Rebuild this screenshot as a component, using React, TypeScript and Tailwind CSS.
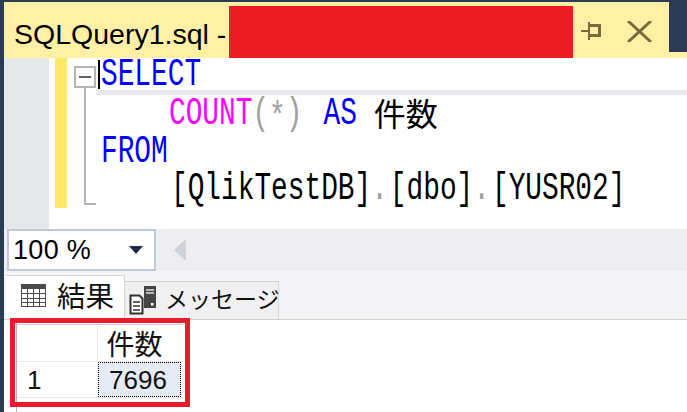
const NAVY = "#2b3a55";

const codeFont = { fontFamily: '"Liberation Mono", "Noto Sans CJK JP", monospace' };

const Code = ({ className = "", children }: { className?: string; children: React.ReactNode }) => (
    <span className={`inline-block origin-center scale-y-[1.38] ${className}`}>{children}</span>
);

const GridIcon = () => (
    <svg className="mb-[3px] shrink-0" width="26" height="24" viewBox="0 0 26 24" fill="none" stroke="#4a4a4a" strokeWidth="1">
        <rect x="0.5" y="0.5" width="24" height="22" />
        <rect x="0.5" y="0.5" width="24" height="4" fill="#4a4a4a" />
        <path d="M6.5 4v19M12.5 4v19M18.5 4v19M0 9.5h25M0 14.5h25M0 18.5h25" />
    </svg>
);

const MessageIcon = () => (
    <svg className="shrink-0" width="28" height="29" viewBox="0 0 28 29" fill="none">
        <path d="M1.5 9.5h9l3 3v15h-12z" fill="#fff" stroke="#333" strokeWidth="2" />
        <path d="M4 16h7M4 20h7M4 24h7" stroke="#333" strokeWidth="1.5" />
        <rect x="15" y="0" width="12" height="22" fill="#444" />
        <path d="M17 4h8M17 7h8" stroke="#ddd" strokeWidth="1.5" />
        <rect x="22" y="17" width="2.5" height="2.5" fill="#fff" />
    </svg>
);

const PinIcon = () => (
    <svg width="21" height="18" viewBox="0 0 21 18" fill="#7d6a3c">
        <path d="M0 8h7v2H0z" />
        <path d="M7 0h2v2h11v13H9v3H7zM9 5v7h8V5z" />
    </svg>
);

const CloseIcon = () => (
    <svg width="25" height="21" viewBox="0 0 25 21" fill="none" stroke="#7d6a3c" strokeWidth="3">
        <path d="M1 0l23 21M24 0L1 21" />
    </svg>
);

export default function App() {
    return (
        <div
            className="relative flex h-[412px] w-[687px] flex-col overflow-hidden border-t-2 border-l-4 bg-white"
            style={{ borderColor: NAVY, fontFamily: '"Liberation Sans", "Noto Sans CJK JP", sans-serif' }}
        >
            {/* Title tab */}
            <div className="flex h-[50px] shrink-0 bg-[#2b3a55]">
                <div className="flex w-[665px] items-center bg-[#fff0a5]">
                    <span className="ml-[10px] w-[215px] pt-[14px] text-[28.5px] leading-none whitespace-nowrap text-black">SQLQuery1.sql -</span>
                    <div className="mt-[4px] h-[46px] w-[344px] self-start bg-[#ed1c24]" />
                    <div className="ml-[8px] flex items-center gap-[25px] pt-[8px]">
                        <PinIcon />
                        <CloseIcon />
                    </div>
                </div>
            </div>
            <div className="flex h-[6px] shrink-0">
                <div className="h-full w-[225px] bg-[#fff0a5]" />
                <div className="h-full w-[344px] bg-[#ed1c24]" />
                <div className="h-full flex-1 bg-[#fff0a5]" />
            </div>

            {/* Editor */}
            <div className="flex h-[171px] shrink-0">
                <div className="w-[45px] shrink-0 bg-[#e6e7e8]" />
                <div className="ml-[6px] h-[150px] w-[12px] shrink-0 bg-[#ffe866]" />
                <div className="ml-[7px] flex w-[22px] shrink-0 flex-col pt-[8px]">
                    <div className="flex h-[22px] w-[22px] items-center justify-center border-2 border-[#b5b5b5]">
                        <div className="h-[2px] w-[12px] bg-[#666]" />
                    </div>
                    <div className="ml-[10px] h-[117px] w-[12px] border-b-2 border-l-2 border-[#b5b5b5]" />
                </div>
                <div className="min-w-0 flex-1 text-[27.8px] leading-none whitespace-pre" style={codeFont}>
                    <div className="flex h-[37px] items-center border-b-[5px] border-[#e8e8ee] pl-[5px]">
                        <span className="absolute ml-[-3px] h-[29px] w-[2px] bg-black" />
                        <Code className="translate-y-[1px] text-[#0000ff]">SELECT</Code>
                    </div>
                    <div className="flex h-[38px] items-center pl-[73px]">
                        <Code className="text-[#ff00ff]">COUNT</Code>
                        <Code className="text-[#a0a0a0]">(</Code>
                        <Code className="translate-y-[4px] text-[#a0a0a0]">*</Code>
                        <Code className="text-[#a0a0a0]">)</Code>
                        <Code className="ml-[21px] text-[#0000ff]">AS</Code>
                        <span className="mt-[-5px] ml-[17px] text-[32px] text-black" style={{ fontFamily: '"Noto Sans CJK JP", sans-serif' }}>件数</span>
                    </div>
                    <div className="flex h-[37px] items-center pl-[5px]">
                        <Code className="text-[#0000ff]">FROM</Code>
                    </div>
                    <div className="flex h-[37px] items-center pl-[75px]">
                        <Code className="text-black">[QlikTestDB]</Code>
                        <Code className="mr-[2px] text-[#a0a0a0]">.</Code>
                        <Code className="text-black">[dbo]</Code>
                        <Code className="mr-[2px] text-[#a0a0a0]">.</Code>
                        <Code className="text-black">[YUSR02]</Code>
                    </div>
                </div>
            </div>

            {/* Zoom bar */}
            <div className="flex h-[42px] shrink-0 items-center bg-[#eeeef2]">
                <div className="ml-[3px] flex h-[42px] w-[149px] items-center justify-between border-2 border-[#c2c8dc] bg-white pr-[11px] pl-[4px] text-[27px] text-black">
                    <span className="tracking-[0.3px]">100 %</span>
                    <span className="h-0 w-0 border-x-[7px] border-t-[8px] border-x-transparent border-t-[#1e2a44]" />
                </div>
                <span className="ml-[18px] h-0 w-0 border-y-[11px] border-r-[12px] border-y-transparent border-r-[#cfd2d8]" />
            </div>

            {/* Result tabs */}
            <div className="flex h-[49px] shrink-0 items-end border-b border-[#d0d0d0] bg-[#f4f4f6] pl-[2px]">
                <div className="flex h-[44px] w-[119px] items-center gap-[10px] border-t border-r border-[#d4d4d4] bg-white pl-[15px] text-[28.5px] text-[#111]">
                    <GridIcon />
                    <span>結果</span>
                </div>
                <div className="flex h-[38px] w-[154px] items-center gap-[8px] border-t border-r border-[#d4d4d4] bg-[#f0f0f2] pl-[4px] text-[23px] whitespace-nowrap text-[#111]">
                    <MessageIcon />
                    <span>メッセージ</span>
                </div>
            </div>

            {/* Results grid */}
            <div className="ml-[12px] flex-1 border-l border-[#b5b5b5] pt-[4px]">
                <div className="w-[166px] border-t border-[#cfcfcf] text-[26px] leading-none text-[#111]">
                    <div className="flex h-[37px] border-b border-[#e8e8e8]">
                        <div className="w-[81px] border-r border-[#e8e8e8]" />
                        <div className="flex w-[73px] items-center justify-center text-[28px]" style={{ fontFamily: '"Noto Sans CJK JP", sans-serif' }}>件数</div>
                    </div>
                    <div className="flex h-[36px] border-b border-[#e8e8e8]">
                        <div className="flex w-[81px] items-center pl-[10px]">1</div>
                        <div className="flex w-[83px] items-center justify-center border border-dotted border-black bg-[#e6ebf3] pr-[3px]">7696</div>
                    </div>
                </div>
            </div>

            {/* Red annotation box */}
            <div className="absolute top-[316px] left-[6px] h-[89px] w-[180px] border-[5px] border-[#e81c2a]" />
        </div>
    );
}
